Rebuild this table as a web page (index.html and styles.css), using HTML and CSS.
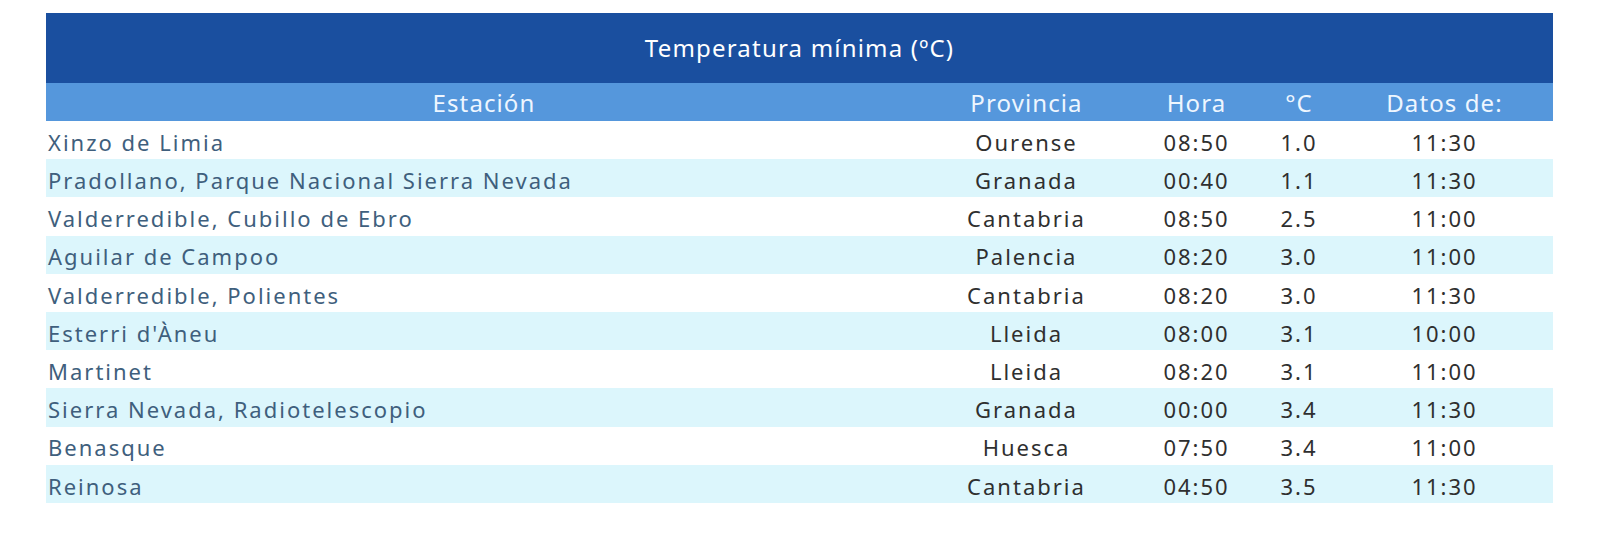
FILE: index.html
```html
<!DOCTYPE html>
<html lang="es">
<head>
<meta charset="utf-8">
<link rel="stylesheet" href="styles.css">
</head>
<body>
<table class="tabla">
  <colgroup>
    <col class="c-est"><col class="c-prov"><col class="c-hora"><col class="c-temp"><col class="c-datos">
  </colgroup>
  <thead>
    <tr><th class="titulo" colspan="5">Temperatura mínima (ºC)</th></tr>
    <tr class="cab"><th>Estación</th><th>Provincia</th><th>Hora</th><th>°C</th><th>Datos de:</th></tr>
  </thead>
  <tbody>
    <tr><td class="est">Xinzo de Limia</td><td>Ourense</td><td>08:50</td><td>1.0</td><td>11:30</td></tr>
    <tr><td class="est">Pradollano, Parque Nacional Sierra Nevada</td><td>Granada</td><td>00:40</td><td>1.1</td><td>11:30</td></tr>
    <tr><td class="est">Valderredible, Cubillo de Ebro</td><td>Cantabria</td><td>08:50</td><td>2.5</td><td>11:00</td></tr>
    <tr><td class="est">Aguilar de Campoo</td><td>Palencia</td><td>08:20</td><td>3.0</td><td>11:00</td></tr>
    <tr><td class="est">Valderredible, Polientes</td><td>Cantabria</td><td>08:20</td><td>3.0</td><td>11:30</td></tr>
    <tr><td class="est">Esterri d'Àneu</td><td>Lleida</td><td>08:00</td><td>3.1</td><td>10:00</td></tr>
    <tr><td class="est">Martinet</td><td>Lleida</td><td>08:20</td><td>3.1</td><td>11:00</td></tr>
    <tr><td class="est">Sierra Nevada, Radiotelescopio</td><td>Granada</td><td>00:00</td><td>3.4</td><td>11:30</td></tr>
    <tr><td class="est">Benasque</td><td>Huesca</td><td>07:50</td><td>3.4</td><td>11:00</td></tr>
    <tr><td class="est">Reinosa</td><td>Cantabria</td><td>04:50</td><td>3.5</td><td>11:30</td></tr>
  </tbody>
</table>
</body>
</html>
```
FILE: styles.css
```css
html, body {
  margin: 0;
  padding: 0;
  background: #ffffff;
}
body {
  padding: 13px 0 0 46px;
  font-family: "Noto Sans", "DejaVu Sans", sans-serif;
}
.tabla {
  width: 1507px;
  border-collapse: collapse;
  table-layout: fixed;
}
.c-est { width: 876px; }
.c-prov { width: 209px; }
.c-hora { width: 131px; }
.c-temp { width: 74px; }
.c-datos { width: 217px; }
.tabla th, .tabla td {
  padding: 0 2px;
  font-weight: normal;
  white-space: nowrap;
  line-height: 1.2;
}
.titulo {
  background: #1a4f9f;
  color: #ffffff;
  height: 70px;
  font-size: 24px;
  letter-spacing: 1.2px;
  text-align: center;
}
.cab th {
  background: #5597dc;
  color: #eef6ff;
  height: 38px;
  padding-top: 3px;
  font-size: 24px;
  letter-spacing: 1.1px;
  text-align: center;
  box-sizing: border-box;
}
.tabla td {
  height: 38.2px;
  padding-top: 4px;
  box-sizing: border-box;
  font-size: 22px;
  letter-spacing: 2px;
  color: #2f2f2f;
  text-align: center;
}
.tabla td.est {
  text-align: left;
  color: #3f5f7d;
}
.tabla tbody tr:nth-child(even) td {
  background: #dcf6fc;
}
```
